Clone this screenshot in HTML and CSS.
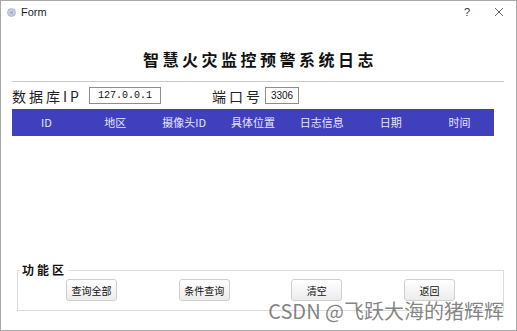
FILE: index.html
```html
<!DOCTYPE html>
<html lang="zh">
	<head>
		<meta charset="UTF-8">
		<title>Form</title>
		<link rel="stylesheet" href="styles.css">
	</head>
	<body>
		<div class="window">
			<div class="titlebar">
				<svg class="appicon" width="9" height="9" viewBox="0 0 9 9">
					<circle cx="4.5" cy="4.5" r="4" fill="#bcd0e6" stroke="#9fb5cf" stroke-width="0.8"/>
					<circle cx="4.5" cy="4.5" r="1.6" fill="#e49aa6"/>
				</svg>
				<span class="caption">Form</span>
				<span class="help">?</span>
				<svg class="close" width="10" height="10" viewBox="0 0 10 10">
					<path d="M1 1 L9 9 M9 1 L1 9" stroke="#666" stroke-width="1" fill="none"/>
				</svg>
			</div>
			<div class="content">
				<h1 class="heading">智慧火灾监控预警系统日志</h1>
				<div class="conn">
					<span class="label label-ip">数据库IP</span>
					<span class="field field-ip">127.0.0.1</span>
					<span class="label label-port">端口号</span>
					<span class="field field-port">3306</span>
				</div>
				<div class="tablehead">
					<span>ID</span>
					<span>地区</span>
					<span>摄像头ID</span>
					<span>具体位置</span>
					<span>日志信息</span>
					<span>日期</span>
					<span>时间</span>
				</div>
				<div class="tablebody"></div>
				<fieldset class="group">
					<legend>功能区</legend>
					<div class="buttons">
						<button>查询全部</button>
						<button>条件查询</button>
						<button>清空</button>
						<button>返回</button>
					</div>
				</fieldset>
			</div>
			<div class="watermark">CSDN @飞跃大海的猪辉辉</div>
		</div>
	</body>
</html>
```

FILE: styles.css
```css
html {
	font-family: "Noto Sans CJK SC", sans-serif;
}

body {
	margin: 0;
	background-color: white;
}

.window {
	position: relative;
	width: 517px;
	height: 331px;
	box-sizing: border-box;
	border: 1px solid #a8a8a8;
	background-color: white;
	overflow: hidden;
}

.titlebar {
	display: flex;
	align-items: center;
	height: 22px;
	padding-left: 6px;
	font-family: "Liberation Sans", sans-serif;
	font-size: 11px;
	color: #1a1a2e;
}
.appicon {
	margin-right: 5px;
}
.caption {
	flex: 1;
}
.help {
	width: 20px;
	margin-right: 10px;
	font-size: 11px;
	color: #333;
}
.close {
	margin-right: 12px;
}

.content {
	padding: 0 12px 0 11px;
}

.heading {
	margin: 0;
	padding: 26px 0 12px 4px;
	border-bottom: 1px solid #c8c8c8;
	text-align: center;
	font-size: 16px;
	line-height: 20px;
	letter-spacing: 3.5px;
	font-weight: bold;
	color: #111;
}

.conn {
	display: flex;
	align-items: center;
	height: 17px;
	margin-top: 5px;
}
.label {
	font-size: 14px;
	letter-spacing: 3px;
	color: #222;
}
.label-ip {
	width: 77px;
}
.label-port {
	width: 53px;
	margin-left: 51px;
}
.field {
	box-sizing: border-box;
	height: 17px;
	border: 1px solid #8c8c8c;
	font-size: 10px;
	line-height: 15px;
	text-align: center;
	color: #111;
}
.field-ip {
	width: 72px;
	font-family: "Liberation Mono", monospace;
}
.field-port {
	width: 34px;
	font-family: "Liberation Sans", sans-serif;
}

.tablehead {
	display: grid;
	grid-template-columns: repeat(7, 1fr);
	width: 482px;
	height: 27px;
	margin-top: 5px;
	background-color: #4040bf;
	color: #e4e4ff;
	font-size: 11px;
	line-height: 27px;
	text-align: center;
}

.tablebody {
	height: 127px;
}

.group {
	margin: 0 0 0 5px;
	padding: 0;
	border: 1px solid #dcdcdc;
}
.group legend {
	margin-left: 2px;
	padding: 0 2px;
	font-size: 12px;
	line-height: 14px;
	font-weight: bold;
	letter-spacing: 3px;
	color: #111;
}

.buttons {
	display: flex;
	justify-content: space-between;
	padding: 2px 48px 9px;
}
.buttons button {
	width: 51px;
	height: 22px;
	padding: 0;
	border: 1px solid #cfcfcf;
	border-radius: 3px;
	background: linear-gradient(#ffffff, #ececec);
	font-family: "Noto Sans CJK SC", sans-serif;
	font-size: 10px;
	color: #111;
}

.watermark {
	position: absolute;
	top: 300px;
	right: 12px;
	font-size: 20px;
	line-height: 20px;
	color: rgba(110, 110, 110, 0.85);
	white-space: nowrap;
}
```
